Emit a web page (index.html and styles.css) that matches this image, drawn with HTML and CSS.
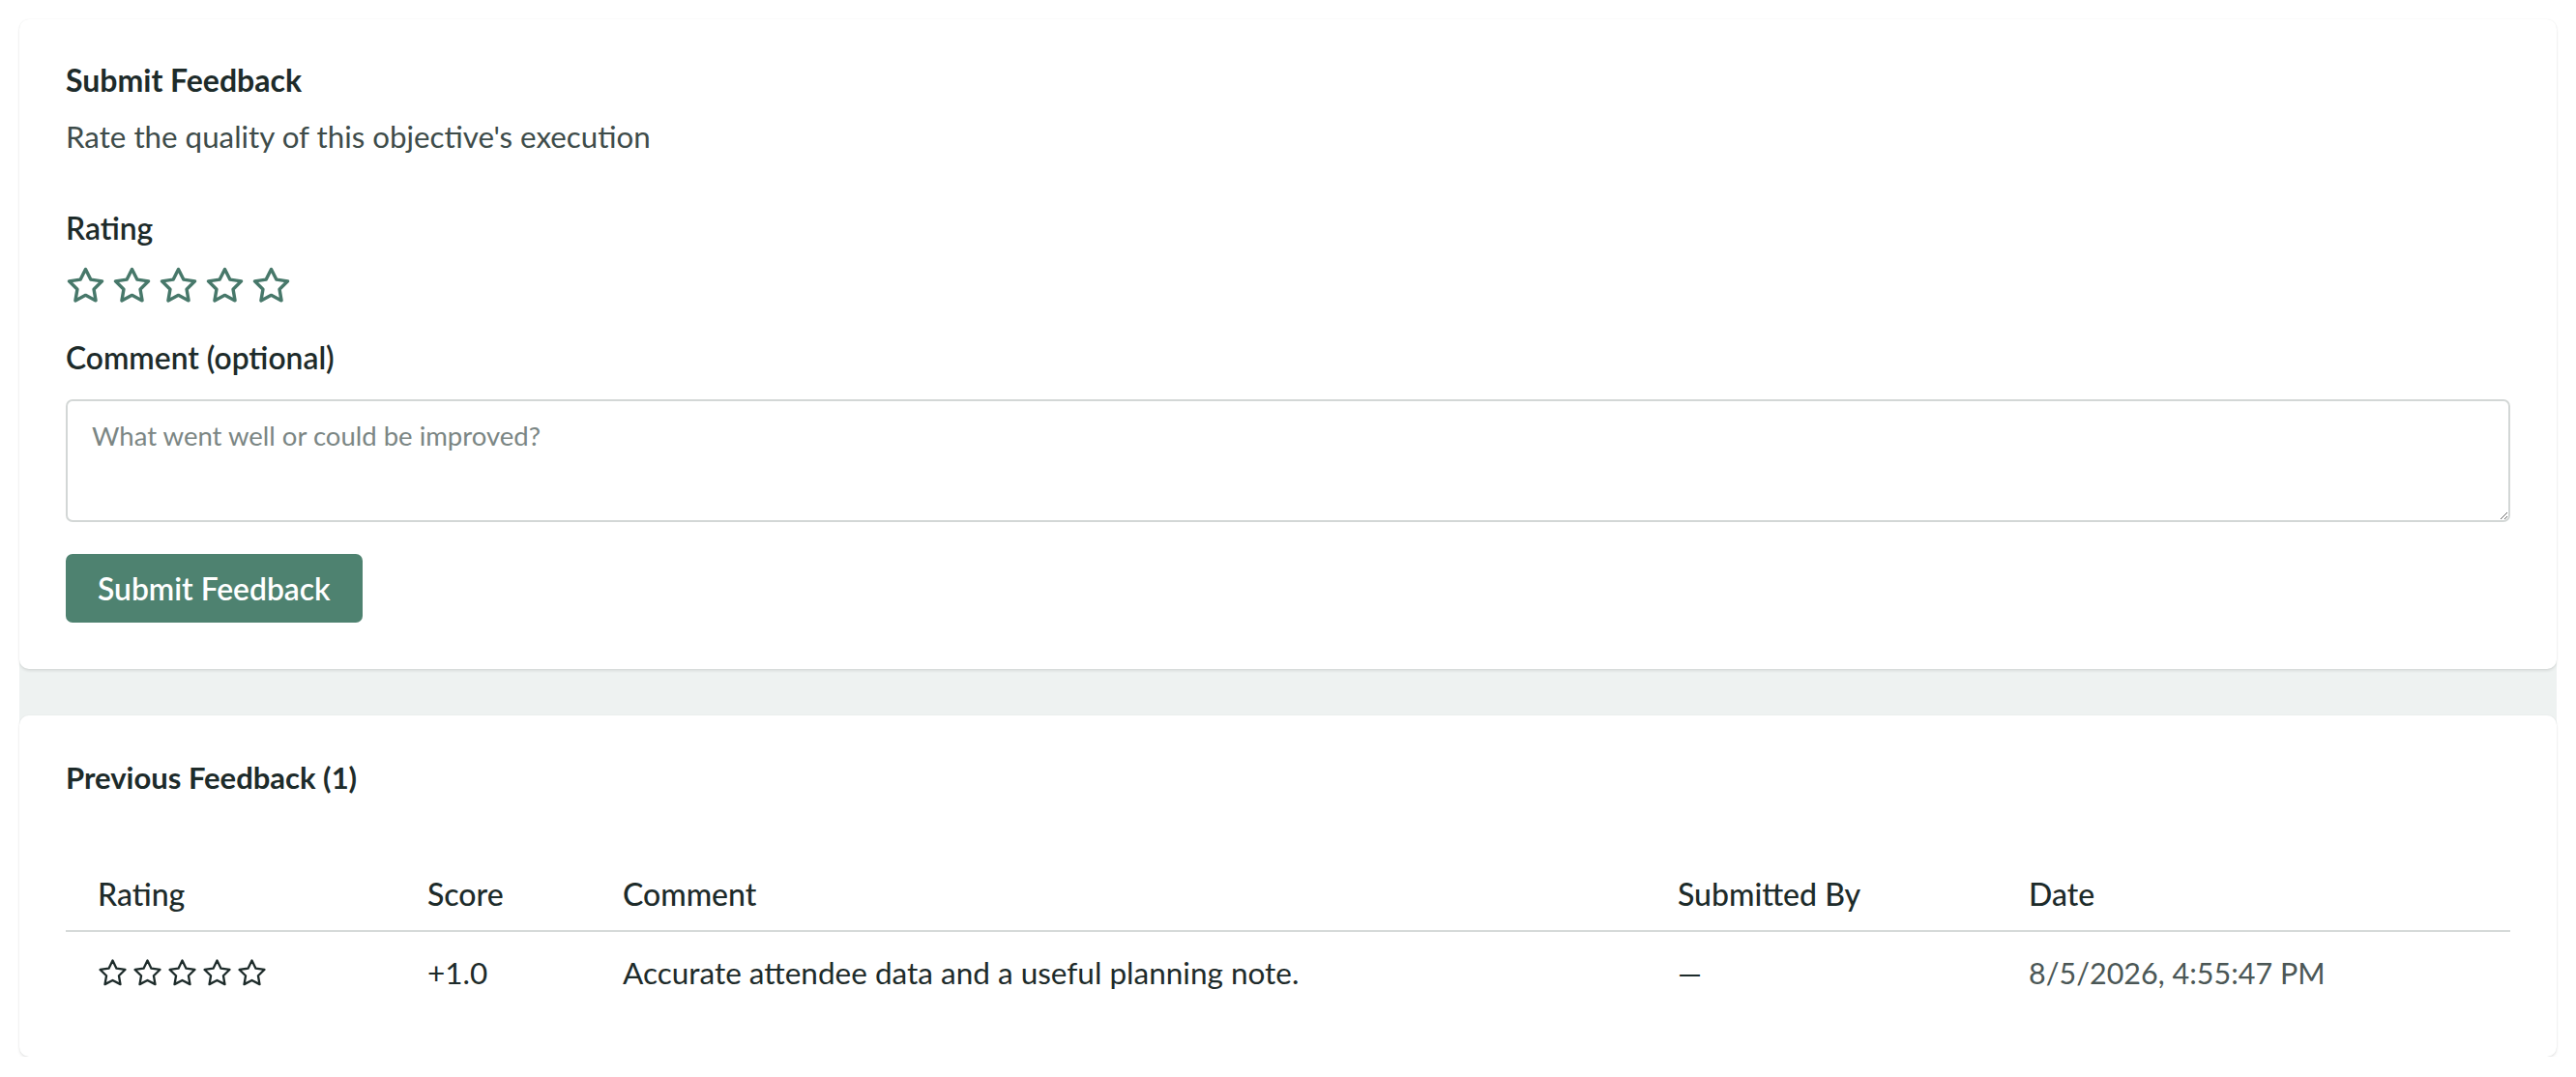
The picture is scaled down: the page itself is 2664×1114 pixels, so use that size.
FILE: index.html
```html
<!DOCTYPE html>
<html lang="en">
<head>
<meta charset="utf-8">
<title>Feedback</title>
<link rel="stylesheet" href="styles.css">
</head>
<body>
<div class="panel">
  <section class="card form-card">
    <h2 class="card-title">Submit Feedback</h2>
    <p class="card-desc">Rate the quality of this objective's execution</p>

    <div class="field-label">Rating</div>
    <div class="star-input">
      <svg class="star" viewBox="0 0 24 24"><polygon points="12 2 15.09 8.26 22 9.27 17 14.14 18.18 21.02 12 17.77 5.82 21.02 7 14.14 2 9.27 8.91 8.26 12 2"/></svg>
      <svg class="star" viewBox="0 0 24 24"><polygon points="12 2 15.09 8.26 22 9.27 17 14.14 18.18 21.02 12 17.77 5.82 21.02 7 14.14 2 9.27 8.91 8.26 12 2"/></svg>
      <svg class="star" viewBox="0 0 24 24"><polygon points="12 2 15.09 8.26 22 9.27 17 14.14 18.18 21.02 12 17.77 5.82 21.02 7 14.14 2 9.27 8.91 8.26 12 2"/></svg>
      <svg class="star" viewBox="0 0 24 24"><polygon points="12 2 15.09 8.26 22 9.27 17 14.14 18.18 21.02 12 17.77 5.82 21.02 7 14.14 2 9.27 8.91 8.26 12 2"/></svg>
      <svg class="star" viewBox="0 0 24 24"><polygon points="12 2 15.09 8.26 22 9.27 17 14.14 18.18 21.02 12 17.77 5.82 21.02 7 14.14 2 9.27 8.91 8.26 12 2"/></svg>
    </div>

    <label class="field-label comment-label" for="comment">Comment (optional)</label>
    <textarea id="comment" class="comment-input" placeholder="What went well or could be improved?"></textarea>

    <button class="submit-btn" type="button">Submit Feedback</button>
  </section>

  <section class="card history-card">
    <h2 class="card-title">Previous Feedback (1)</h2>
    <table class="feedback-table">
      <colgroup>
        <col class="col-rating">
        <col class="col-score">
        <col class="col-comment">
        <col class="col-by">
        <col class="col-date">
      </colgroup>
      <thead>
        <tr>
          <th>Rating</th>
          <th>Score</th>
          <th>Comment</th>
          <th>Submitted By</th>
          <th>Date</th>
        </tr>
      </thead>
      <tbody>
        <tr>
          <td>
            <div class="star-display">
              <svg class="star-sm" viewBox="0 0 24 24"><polygon points="12 2 15.09 8.26 22 9.27 17 14.14 18.18 21.02 12 17.77 5.82 21.02 7 14.14 2 9.27 8.91 8.26 12 2"/></svg>
              <svg class="star-sm" viewBox="0 0 24 24"><polygon points="12 2 15.09 8.26 22 9.27 17 14.14 18.18 21.02 12 17.77 5.82 21.02 7 14.14 2 9.27 8.91 8.26 12 2"/></svg>
              <svg class="star-sm" viewBox="0 0 24 24"><polygon points="12 2 15.09 8.26 22 9.27 17 14.14 18.18 21.02 12 17.77 5.82 21.02 7 14.14 2 9.27 8.91 8.26 12 2"/></svg>
              <svg class="star-sm" viewBox="0 0 24 24"><polygon points="12 2 15.09 8.26 22 9.27 17 14.14 18.18 21.02 12 17.77 5.82 21.02 7 14.14 2 9.27 8.91 8.26 12 2"/></svg>
              <svg class="star-sm" viewBox="0 0 24 24"><polygon points="12 2 15.09 8.26 22 9.27 17 14.14 18.18 21.02 12 17.77 5.82 21.02 7 14.14 2 9.27 8.91 8.26 12 2"/></svg>
            </div>
          </td>
          <td>+1.0</td>
          <td>Accurate attendee data and a useful planning note.</td>
          <td>—</td>
          <td class="date">8/5/2026, 4:55:47 PM</td>
        </tr>
      </tbody>
    </table>
  </section>
</div>
</body>
</html>
```

FILE: styles.css
```css
* {
  box-sizing: border-box;
}

html, body {
  margin: 0;
  padding: 0;
  background: #ffffff;
}

body {
  font-family: "Lato", "Noto Sans", sans-serif;
  color: #1d2b2a;
  font-size: 31px;
}

.panel {
  margin: 20px 20px 0;
  background: #eef2f1;
  display: flex;
  flex-direction: column;
  gap: 48px;
  border-radius: 10px;
}

.card {
  background: #ffffff;
  border-radius: 10px;
  box-shadow: 0 2px 3px rgba(0, 0, 0, 0.09), 0 0 0 1px rgba(0, 0, 0, 0.015);
  padding: 0 48px;
}

.form-card {
  padding-top: 43px;
  padding-bottom: 48px;
}

.history-card {
  padding-top: 44px;
  padding-bottom: 44px;
}

.card-title {
  margin: 0;
  font-size: 32px;
  line-height: 40px;
  font-weight: 700;
  color: #1d2b2a;
}

.history-card .card-title {
  font-size: 31px;
}

.card-desc {
  margin: 18px 0 0;
  font-size: 31.3px;
  line-height: 40px;
  color: #3e4c4a;
}

.field-label {
  display: block;
  margin-top: 55px;
  font-size: 31.8px;
  line-height: 40px;
  font-weight: 600;
  color: #1d2b2a;
}

.star-input {
  display: flex;
  gap: 7px;
  margin-top: 19px;
}

.star {
  width: 41px;
  height: 41px;
  fill: none;
  stroke: #47786a;
  stroke-width: 2;
  stroke-linejoin: round;
  stroke-linecap: round;
}

.comment-label {
  margin-top: 34px;
}

.comment-input {
  display: block;
  width: 100%;
  height: 127px;
  margin-top: 23px;
  padding: 17px 25px;
  border: 2px solid #d3d7d6;
  border-radius: 7px;
  font-family: "Lato", "Noto Sans", sans-serif;
  font-size: 27.5px;
  line-height: 38px;
  color: #1d2b2a;
  background: #ffffff;
}

.comment-input::placeholder {
  color: #7b8684;
}

.submit-btn {
  display: block;
  margin-top: 33px;
  height: 71px;
  padding: 0 33px;
  border: none;
  border-radius: 7px;
  background: #4e8270;
  color: #ffffff;
  font-family: "Lato", "Noto Sans", sans-serif;
  font-size: 31.8px;
  font-weight: 600;
}

.feedback-table {
  width: 100%;
  margin-top: 65px;
  border-collapse: collapse;
  table-layout: fixed;
}

.col-rating { width: 341px; }
.col-score { width: 202px; }
.col-comment { width: 1091px; }
.col-by { width: 363px; }
.col-date { width: auto; }

.feedback-table th {
  text-align: left;
  font-weight: 500;
  font-size: 32px;
  line-height: 40px;
  padding: 16px 33px 17px;
  border-bottom: 2px solid #d6dad9;
  color: #1d2b2a;
}

.feedback-table td {
  font-size: 31.5px;
  line-height: 40px;
  padding: 22px 33px 23px;
  color: #1d2b2a;
}

.star-display {
  display: flex;
  align-items: center;
  gap: 5px;
  height: 40px;
}

.star-sm {
  width: 31px;
  height: 31px;
  fill: none;
  stroke: #1d2b2a;
  stroke-width: 1.8;
  stroke-linejoin: round;
  stroke-linecap: round;
}

.feedback-table td.date {
  font-size: 30.5px;
  color: #4b5756;
}
```
